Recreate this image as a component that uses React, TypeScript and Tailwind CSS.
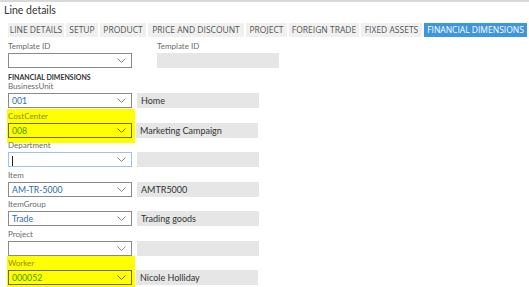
import React from "react";

const tabs: { label: string; w: string; active?: boolean }[] = [
  { label: "LINE DETAILS", w: "w-[56px]" },
  { label: "SETUP", w: "w-[32px]" },
  { label: "PRODUCT", w: "w-[46px]" },
  { label: "PRICE AND DISCOUNT", w: "w-[96px]" },
  { label: "PROJECT", w: "w-[41px]" },
  { label: "FOREIGN TRADE", w: "w-[70px]" },
  { label: "FIXED ASSETS", w: "w-[61px]" },
  { label: "FINANCIAL DIMENSIONS", w: "w-[103px]", active: true },
];

function Chevron({ color = "#8a8a8a" }: { color?: string }) {
  return (
    <svg width="9" height="5" viewBox="0 0 9 5" className="shrink-0">
      <path d="M0.5 0.5 L4.5 4.5 L8.5 0.5" fill="none" stroke={color} strokeWidth="1" />
    </svg>
  );
}

type Row = {
  label: string;
  value: string;
  desc: string;
  h: string;
  highlight?: boolean;
  focused?: boolean;
};

const rows: Row[] = [
  { label: "BusinessUnit", value: "001", desc: "Home", h: "h-[29px]" },
  { label: "CostCenter", value: "008", desc: "Marketing Campaign", highlight: true, h: "h-[30px]" },
  { label: "Department", value: "", desc: "", focused: true, h: "h-[29px]" },
  { label: "Item", value: "AM-TR-5000", desc: "AMTR5000", h: "h-[30px]" },
  { label: "ItemGroup", value: "Trade", desc: "Trading goods", h: "h-[29px]" },
  { label: "Project", value: "", desc: "", h: "h-[30px]" },
  { label: "Worker", value: "000052", desc: "Nicole Holliday", highlight: true, h: "h-[29px]" },
];

function DimRow({ r }: { r: Row }) {
  const hl = r.highlight;
  return (
    <div className={"flex items-end " + r.h}>
      <div
        className={
          hl
            ? "flex flex-col bg-[#ffff00] ml-[-1px] pl-[1px] pr-[3px] pt-[2px] pb-[5px] mb-[-5px] mt-[-2px]"
            : "flex flex-col"
        }
      >
        <div
          className={
            "text-[8px] leading-[11px] h-[11px] " + (hl ? "text-[#8c8c3c]" : "text-[#6b6b6b]")
          }
        >
          {r.label}
        </div>
        <div
          className={
            "mt-[1px] w-[124px] h-[15px] border flex items-center pl-[3px] pr-[5px] " +
            (hl
              ? "border-[#6b6b00] bg-[#ffff00]"
              : r.focused
              ? "border-[#9cc3e8] bg-white"
              : "border-[#8a8a8a] bg-white")
          }
        >
          <div
            className={
              "flex-1 text-[8.7px] leading-[13px] " + (hl ? "text-[#3f9a00]" : "text-[#2b6cb0]")
            }
          >
            {r.focused ? <span className="inline-block w-[1px] h-[10px] bg-[#222] align-middle" /> : r.value}
          </div>
          <Chevron color={hl ? "#6b6b00" : "#8a8a8a"} />
        </div>
      </div>
      <div
        className={
          (hl ? "ml-[1px] " : "ml-[5px] ") +
          "w-[122px] h-[15px] bg-[#e6e6e6] text-[9px] leading-[15px] text-[#333] pl-[4px]"
        }
      >
        {r.desc}
      </div>
    </div>
  );
}

export default function App() {
  return (
    <div className="w-[529px] h-[287px] bg-white overflow-hidden border-t-2 border-[#d9d9d9] font-['Lato',sans-serif]">
      <div className="pl-[4px] pt-[1px] text-[10.5px] leading-[14px] text-[#333]">Line details</div>
      <div className="flex gap-[2px] pl-[8px] mt-[6px]">
        {tabs.map((t) => (
          <div
            key={t.label}
            className={
              t.w +
              " h-[14px] font-['Open_Sans',sans-serif] text-[8.5px] leading-[14px] text-center whitespace-nowrap " +
              (t.active ? "bg-[#3d97dc] text-white" : "bg-[#f0f0f0] text-[#555]")
            }
          >
            {t.label}
          </div>
        ))}
      </div>
      <div className="pl-[8px] mt-[4px] flex gap-[25px]">
        <div className="flex flex-col">
          <div className="text-[8px] leading-[11px] h-[11px] text-[#6b6b6b]">Template ID</div>
          <div className="mt-[1px] w-[124px] h-[15px] border border-[#8a8a8a] flex items-center justify-end pr-[5px]">
            <Chevron />
          </div>
        </div>
        <div className="flex flex-col">
          <div className="text-[8px] leading-[11px] h-[11px] text-[#6b6b6b]">Template ID</div>
          <div className="mt-[1px] w-[122px] h-[15px] bg-[#e6e6e6]" />
        </div>
      </div>
      <div className="pl-[8px] mt-[4px] text-[7px] leading-[10px] font-bold text-[#333]">
        FINANCIAL DIMENSIONS
      </div>
      <div className="pl-[8px] flex flex-col mt-[-3px]">
        {rows.map((r) => (
          <DimRow key={r.label} r={r} />
        ))}
      </div>
    </div>
  );
}
